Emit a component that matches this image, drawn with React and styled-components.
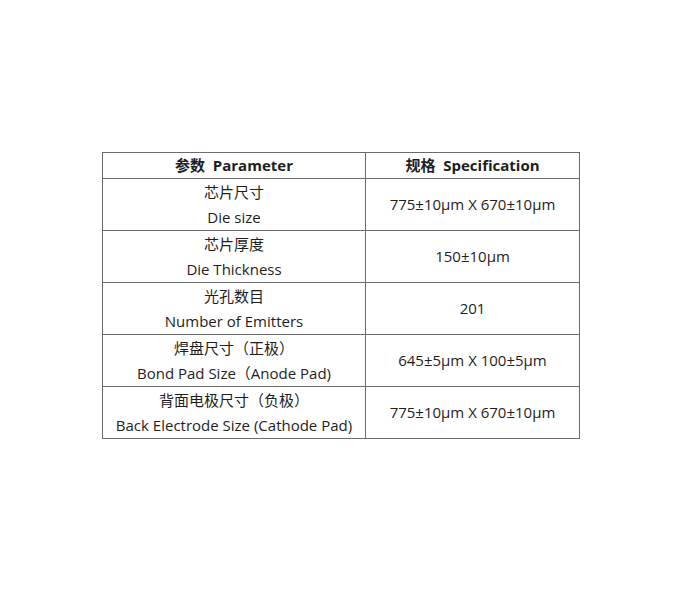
import React from 'react';
import styled, { createGlobalStyle } from 'styled-components';

const GlobalStyle = createGlobalStyle`
  html, body {
    margin: 0;
    padding: 0;
    background: #ffffff;
  }
  body {
    font-family: "Open Sans", "Noto Sans CJK SC", sans-serif;
    color: #1e1e1e;
  }
`;

const Page = styled.div`
  width: 682px;
  height: 600px;
  padding-top: 152px;
  padding-left: 102px;
  box-sizing: border-box;
`;

const Table = styled.table`
  border-collapse: collapse;
  width: 475px;
  table-layout: fixed;
  font-size: 15px;
`;

const HeadCell = styled.th`
  border: 1px solid #6b6b6b;
  height: 25px;
  padding: 0;
  font-weight: 700;
  text-align: center;
  line-height: 25px;
  width: ${p => p.$w}px;
`;

const Cell = styled.td`
  border: 1px solid #6b6b6b;
  height: 51px;
  padding: 0;
  text-align: center;
  line-height: 25px;
  vertical-align: middle;
`;

const Line = styled.div`
  white-space: nowrap;
`;

const rows = [
  { zh: '芯片尺寸', en: 'Die size', spec: '775±10μm X 670±10μm' },
  { zh: '芯片厚度', en: 'Die Thickness', spec: '150±10μm' },
  { zh: '光孔数目', en: 'Number of Emitters', spec: '201' },
  { zh: '焊盘尺寸（正极）', en: 'Bond Pad Size（Anode Pad)', spec: '645±5μm X 100±5μm' },
  { zh: '背面电极尺寸（负极）', en: 'Back Electrode Size (Cathode Pad)', spec: '775±10μm X 670±10μm' },
];

export default function App() {
  return (
    <>
      <GlobalStyle />
      <Page>
        <Table>
          <thead>
            <tr>
              <HeadCell $w={262}>参数&nbsp; Parameter</HeadCell>
              <HeadCell $w={213}>规格&nbsp; Specification</HeadCell>
            </tr>
          </thead>
          <tbody>
            {rows.map(r => (
              <tr key={r.en}>
                <Cell>
                  <Line>{r.zh}</Line>
                  <Line>{r.en}</Line>
                </Cell>
                <Cell>{r.spec}</Cell>
              </tr>
            ))}
          </tbody>
        </Table>
      </Page>
    </>
  );
}
